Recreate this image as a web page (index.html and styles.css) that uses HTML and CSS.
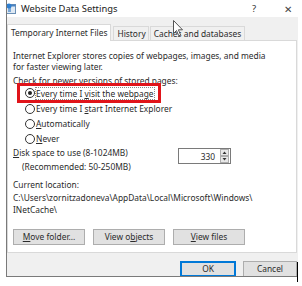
FILE: index.html
```html
<!DOCTYPE html>
<html>
<head>
<meta charset="utf-8">
<link rel="stylesheet" href="styles.css">
</head>
<body>
<div class="dialog">
  <div class="titlebar">
    <svg class="appicon" width="11" height="12" viewBox="0 0 11 12">
      <rect x="0.5" y="1.5" width="9" height="9" fill="#dfe9f3" stroke="#6a8fb5"/>
      <rect x="0.5" y="1.5" width="9" height="2" fill="#4b83c1"/>
      <rect x="2" y="5" width="3" height="4" fill="#7aa7d6"/>
      <circle cx="3" cy="3" r="2.5" fill="#2f7fd0"/>
    </svg>
    <span class="title">Website Data Settings</span>
    <span class="help">?</span>
    <span class="close">✕</span>
  </div>
  <div class="tabs">
    <div class="tab active">Temporary Internet Files</div>
    <div class="tab">History</div>
    <div class="tab">Caches and databases</div>
  </div>
  <div class="panel">
    <p class="intro">Internet Explorer stores copies of webpages, images, and media<br>for faster viewing later.</p>
    <p class="check">Check for newer versions of stored pages:</p>
    <div class="radios">
      <div class="radio"><span class="dot on"></span><span class="focus">Every time I <u>v</u>isit the webpage</span></div>
      <div class="radio"><span class="dot"></span><span>Every time I <u>s</u>tart Internet Explorer</span></div>
      <div class="radio"><span class="dot"></span><span><u>A</u>utomatically</span></div>
      <div class="radio"><span class="dot"></span><span><u>N</u>ever</span></div>
      <div class="highlight"></div>
    </div>
    <div class="disk">
      <div class="disklabels">
        <div><u>D</u>isk space to use (8-1024MB)</div>
        <div class="rec">(Recommended: 50-250MB)</div>
      </div>
      <div class="spin">
        <span class="spinval">330</span>
        <span class="spinbtns">
          <svg width="9" height="14" viewBox="0 0 9 14"><rect x="0.5" y="0.5" width="8" height="6" fill="#e8e8e8" stroke="#adadad"/><rect x="0.5" y="7.5" width="8" height="6" fill="#e8e8e8" stroke="#adadad"/><path d="M2.5 5 L4.5 2.5 L6.5 5 Z" fill="#333"/><path d="M2.5 9 L4.5 11.5 L6.5 9 Z" fill="#333"/></svg>
        </span>
      </div>
    </div>
    <p class="loclabel">Current location:</p>
    <p class="path">C:\Users\zornitzadoneva\AppData\Local\Microsoft\Windows\<br>INetCache\</p>
    <div class="buttons">
      <button class="btn"><u>M</u>ove folder...</button>
      <button class="btn">View o<u>b</u>jects</button>
      <button class="btn"><u>V</u>iew files</button>
    </div>
  </div>
  <div class="footer">
    <button class="btn ok">OK</button>
    <button class="btn cancel">Cancel</button>
  </div>
  <svg class="cursor" width="11" height="17" viewBox="0 0 11 17">
    <path d="M0.5 0.5 L0.5 13.5 L3.5 10.5 L5.8 15.8 L7.6 15 L5.4 9.8 L9.5 9.8 Z" fill="#fff" stroke="#555" stroke-width="1"/>
  </svg>
</div>
<div class="ibeam"></div>
</body>
</html>
```

FILE: styles.css
```css
html, body {
  margin: 0;
  padding: 0;
  background: #ffffff;
}
body {
  width: 302px;
  height: 286px;
  overflow: hidden;
  position: relative;
  font-family: "Noto Sans", "Open Sans", sans-serif;
  font-size: 8.4px;
  color: #2b2b2b;
}
p { margin: 0; }
u { text-decoration: underline; text-underline-offset: 1px; }

.dialog {
  position: relative;
  margin-left: 6px;
  width: 291px;
  height: 276px;
  background: #f0f0f0;
  border-left: 1px solid #7a7a7a;
  border-bottom: 1px solid #7a7a7a;
  overflow: hidden;
}
.titlebar {
  height: 17px;
  background: #ffffff;
  display: flex;
  align-items: center;
  margin-left: -1px;
}
.appicon { margin-left: 0px; margin-right: 4px; }
.title {
  font-size: 9.4px;
  color: #222;
  flex: 1;
}
.help {
  font-size: 9.5px;
  color: #333;
  margin-right: 28px;
}
.close {
  font-size: 10px;
  color: #444;
  margin-right: 6px;
}
.tabs {
  display: flex;
  align-items: flex-end;
  height: 23px;
  padding-left: 0;
}
.tab {
  height: 13px;
  line-height: 13px;
  padding: 0 3px;
  border: 1px solid #d9d9d9;
  border-bottom: none;
  background: #f0f0f0;
  color: #2b2b2b;
  margin-left: -1px;
}
.tab.active {
  height: 16px;
  line-height: 16px;
  background: #ffffff;
  margin-left: 0;
  margin-right: 1px;
  padding: 0 3px 0 3px;
  position: relative;
  z-index: 1;
  margin-bottom: -1px;
}
.tab:nth-child(2) { margin-left: 1px; padding: 0 2px 0 3px; }
.tab:nth-child(3) { margin-left: 1px; padding: 0 3px 0 3px; }
.panel {
  height: 213px;
  background: #ffffff;
  border: 1px solid #d9d9d9;
  padding-left: 5px;
  box-sizing: border-box;
  width: 290px;
  line-height: 11px;
}
.intro { margin-top: 9px; }
.check { margin-top: 3px; }
.radios {
  position: relative;
  margin-top: -1px;
  padding-left: 12px;
}
.radio {
  height: 15px;
  display: flex;
  align-items: center;
}
.radio:first-child { height: 16px; }
.dot {
  width: 8px;
  height: 8px;
  border: 1px solid #333;
  border-radius: 50%;
  margin-right: 1px;
  position: relative;
  background: #fff;
}
.dot.on::after {
  content: "";
  position: absolute;
  left: 2px;
  top: 2px;
  width: 4px;
  height: 4px;
  border-radius: 50%;
  background: #222;
}
.focus {
  outline: 1px dotted #888;
  outline-offset: 0;
}
.highlight {
  position: absolute;
  left: 4px;
  top: -2px;
  width: 138px;
  height: 14px;
  border: 3px solid #e0141a;
}
.disk {
  display: flex;
  margin-top: 1px;
  height: 27px;
}
.disklabels { width: 165px; }
.rec { margin-top: 3px; padding-left: 9px; }
.spin {
  margin-top: 1px;
  width: 53px;
  height: 16px;
  box-sizing: border-box;
  border: 1px solid #7a7a7a;
  display: flex;
  align-items: center;
  justify-content: flex-end;
  background: #fff;
}
.spinval { margin-right: 5px; }
.spinbtns { display: flex; margin-right: 1px; }
.loclabel { margin-top: 5px; }
.path { margin-top: 2px; line-height: 12px; }
.buttons {
  display: flex;
  gap: 8px;
  margin-top: 13px;
  padding-left: 0;
}
.btn {
  font-family: inherit;
  font-size: 8.4px;
  color: #2b2b2b;
  background: #e1e1e1;
  border: 1px solid #adadad;
  height: 16px;
  width: 72px;
  padding: 0;
  line-height: 14px;
}
.footer {
  display: flex;
  justify-content: flex-end;
  gap: 7px;
  padding-top: 8px;
  padding-right: 0;
  width: 290px;
}
.ok {
  width: 56px;
  border: 1px solid #0078d7;
  box-shadow: inset 0 0 0 1px #0078d7;
}
.cancel { width: 54px; }
.cursor {
  position: absolute;
  left: 166px;
  top: 20px;
}
.ibeam {
  position: absolute;
  left: 297px;
  top: 262px;
  width: 1px;
  height: 20px;
  background: #000;
}
```
